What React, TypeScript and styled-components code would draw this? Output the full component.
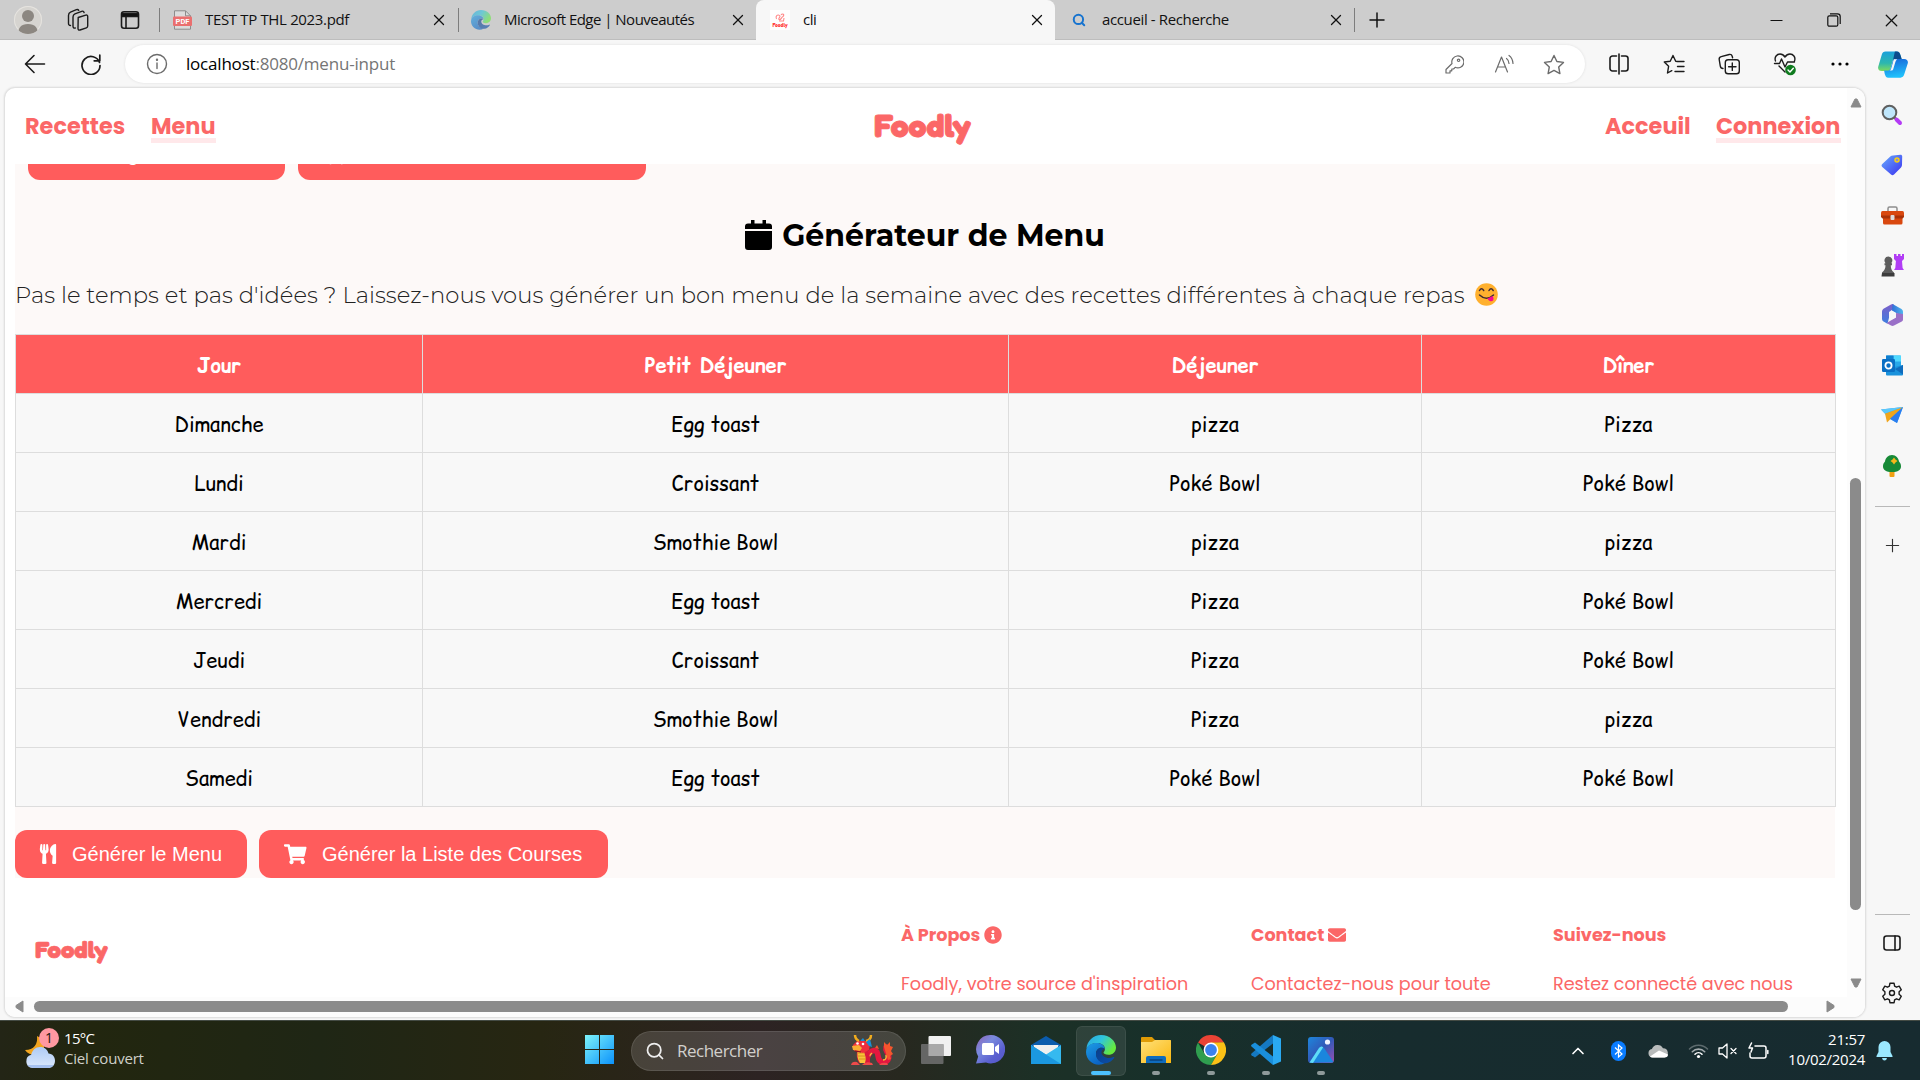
import React from 'react';
import styled, { createGlobalStyle, css } from 'styled-components';
import { FaUtensils, FaShoppingCart, FaInfoCircle, FaEnvelope, FaSave } from 'react-icons/fa';
import { Search, X, Plus, Minus, ChevronUp } from 'lucide-react';

const CORAL = '#ff5c5c';
const PINK_TEXT = '#fb6767';
const UI = `'Segoe UI', 'Open Sans', 'Noto Sans', sans-serif`;
const SITE = `Poppins, Inter, sans-serif`;
const TITLE = `Montserrat, Inter, 'Open Sans', sans-serif`;
const HAND = `'Comic Relief', 'Comic Neue', 'Open Sans', sans-serif`;

const Global = createGlobalStyle`
  * { box-sizing: border-box; }
  html, body { margin: 0; padding: 0; overflow: hidden; background: #f7f7f7; }
  svg { display: block; flex: none; }
`;

/* ---------- shell ---------- */
const Screen = styled.div`
  width: 1920px;
  height: 1080px;
  display: flex;
  flex-direction: column;
  background: #f7f7f7;
  font-family: ${UI};
  color: #111;
  overflow: hidden;
`;

const TabStrip = styled.div`
  height: 40px;
  flex: none;
  display: flex;
  align-items: stretch;
  background: #cdcdcd;
  box-shadow: inset 0 -1px 0 #bdbdbd;
`;

const StripIcons = styled.div`
  width: 158px;
  padding-left: 14px;
  display: flex;
  align-items: center;
`;

const StripIcon = styled.div<{ $w: number }>`
  width: ${(p) => p.$w}px;
  display: flex;
  justify-content: center;
`;

const Avatar = styled.div`
  width: 28px;
  height: 28px;
  border-radius: 50%;
  overflow: hidden;
  background: #d6d4d0;
  box-shadow: inset 0 0 0 1px #e6e4e0;
`;

const Tab = styled.div<{ $active?: boolean; $bar?: boolean }>`
  width: 299px;
  display: flex;
  align-items: center;
  padding: 0 9px 0 13px;
  border-left: 1px solid transparent;
  ${(p) =>
    p.$bar &&
    css`
      background: linear-gradient(#7d7d7d, #7d7d7d) 0 8px / 1px 24px no-repeat;
    `}
  ${(p) =>
    p.$active &&
    css`
      background: #f7f7f7;
      border-radius: 8px 8px 0 0;
    `}
`;

const TabIcon = styled.div`
  width: 20px;
  height: 20px;
  margin-right: 13px;
  display: flex;
  align-items: center;
  justify-content: center;
`;

const TabTitle = styled.span<{ $track: number }>`
  flex: 1;
  font-size: 15px;
  line-height: 20px;
  padding-bottom: 2px;
  white-space: nowrap;
  letter-spacing: ${(p) => p.$track}px;
`;

const NewTab = styled.div`
  width: 46px;
  display: flex;
  align-items: center;
  justify-content: center;
  background: linear-gradient(#7d7d7d, #7d7d7d) 0 8px / 1px 24px no-repeat;
`;

const WindowControls = styled.div`
  margin-left: auto;
  display: flex;
`;

const WindowButton = styled.div`
  width: 57.5px;
  display: flex;
  align-items: center;
  justify-content: center;
`;

/* ---------- toolbar ---------- */
const Toolbar = styled.div`
  height: 48px;
  flex: none;
  display: flex;
  align-items: center;
  padding: 0 1px 0 6px;
`;

const ToolButton = styled.div<{ $w?: number }>`
  width: ${(p) => p.$w ?? 55.3}px;
  display: flex;
  align-items: center;
  justify-content: center;
`;

const AddressBar = styled.div`
  width: 1460px;
  height: 38px;
  margin: 0 6px 0 7px;
  padding: 0 6px 0 21px;
  display: flex;
  align-items: center;
  background: #fff;
  border-radius: 19px;
  box-shadow: 0 0 3px rgba(0, 0, 0, 0.1);
`;

const Url = styled.span`
  flex: 1;
  margin-left: 18px;
  font-size: 17px;
  line-height: 24px;
  letter-spacing: -0.2px;
  color: #757575;
  b { font-weight: 400; color: #000; }
`;

/* ---------- body ---------- */
const Body = styled.div`
  height: 932px;
  flex: none;
  display: flex;
`;

const PageFrame = styled.div`
  width: 1860px;
  height: 929px;
  margin-left: 5px;
  display: grid;
  grid-template-columns: 1842px 18px;
  grid-template-rows: 909px 20px;
  background: #fff;
  border-radius: 10px 12px 12px 10px;
  box-shadow: 0 0 2px 1px rgba(0, 0, 0, 0.12);
  overflow: hidden;
`;

const Site = styled.div`
  overflow: hidden;
  display: flex;
  flex-direction: column;
`;

const SiteHeader = styled.header`
  height: 76px;
  flex: none;
  padding: 0 6px 0 20px;
  display: flex;
  align-items: center;
  justify-content: space-between;
  font-family: ${SITE};
  color: ${PINK_TEXT};
`;

const Nav = styled.nav`
  display: flex;
  gap: 25px;
`;

const NavLink = styled.a<{ $w: number; $on?: boolean }>`
  width: ${(p) => p.$w}px;
  height: 34px;
  line-height: 34px;
  font-size: 22.4px;
  font-weight: 700;
  white-space: nowrap;
  border-bottom: 5px solid ${(p) => (p.$on ? '#ffe8ea' : 'transparent')};
`;

const Brand = styled.span<{ $size: number }>`
  font-family: Fredoka, Nunito, Lato, sans-serif;
  font-weight: 700;
  font-size: ${(p) => p.$size}px;
  line-height: 1.2;
  -webkit-text-stroke: ${(p) => p.$size / 36}px ${PINK_TEXT};
  color: ${PINK_TEXT};
`;

const HeaderBrand = styled.div`
  width: 97px;
  margin: 1px 0 0 24px;
`;

const Main = styled.main`
  width: 1820px;
  height: 714px;
  flex: none;
  margin-left: 10px;
  background: #fdf9f8;
  display: flex;
  flex-direction: column;
`;

const ClippedRow = styled.div`
  height: 16px;
  flex: none;
  padding-left: 13px;
  display: flex;
  align-items: flex-end;
  gap: 13px;
  overflow: hidden;
`;

const ActionRow = styled.div`
  display: flex;
  gap: 12px;
  margin-top: 23px;
`;

const ActionButton = styled.button<{ $w: number; $pad?: number; $gap?: number; $lift?: number }>`
  width: ${(p) => p.$w}px;
  height: 48px;
  flex: none;
  padding: 0 0 ${(p) => p.$lift ?? 0}px ${(p) => p.$pad ?? 25}px;
  border: 0;
  border-radius: 12px;
  background: ${CORAL};
  color: #fff;
  display: flex;
  align-items: center;
  gap: ${(p) => p.$gap ?? 15.5}px;
  font: 400 20px/24px 'Liberation Sans', Arial, sans-serif;
  white-space: nowrap;
`;

const Heading = styled.h2`
  height: 88px;
  margin: 0;
  padding-top: 32px;
  display: flex;
  justify-content: center;
  gap: 10px;
  font: 700 30px/48px ${TITLE};
  color: #000;
  svg { margin-top: 8px; }
`;

const Lead = styled.p`
  height: 66px;
  margin: 0;
  padding-top: 10px;
  display: flex;
  gap: 10px;
  font: 300 22.7px/34px ${TITLE};
  letter-spacing: 0.04px;
  color: #222;
  white-space: nowrap;
  svg { margin-top: 5px; }
`;

const MenuTable = styled.table`
  width: 1820px;
  table-layout: fixed;
  border-collapse: collapse;
  font-family: ${HAND};
  font-size: 20px;
  line-height: 28px;
  color: #000;
`;

const Row = styled.tr`
  height: 59px;
`;

const HeadCell = styled.th<{ $w: number }>`
  width: ${(p) => p.$w}px;
  padding: 4px 0 0;
  border: 1px solid #ddd;
  background: ${CORAL};
  color: #fff;
  font-weight: 700;
`;

const Cell = styled.td`
  padding: 4px 0 0;
  border: 1px solid #ddd;
  background: #f8f8f8;
  text-align: center;
`;

const SiteFooter = styled.footer`
  height: 119px;
  flex: none;
  padding: 42px 0 0 30px;
  display: grid;
  grid-template-columns: 866px 350px 302px 1fr;
  font-family: ${SITE};
  color: ${PINK_TEXT};
`;

const FooterBrand = styled.div`
  padding-top: 16px;
`;

const FooterTitle = styled.h4`
  height: 30px;
  margin: 0 0 20px;
  display: flex;
  align-items: center;
  gap: 4px;
  font-size: 17.6px;
  font-weight: 700;
`;

const FooterText = styled.p`
  margin: 0;
  font-size: 17.6px;
  line-height: 28px;
  font-weight: 400;
  white-space: nowrap;
`;

const ScrollV = styled.div`
  background: #fcfcfc;
  display: flex;
  flex-direction: column;
  padding: 10px 0 9px 3px;
`;

const ThumbV = styled.div`
  width: 11px;
  height: 434px;
  margin: 370px 0 68px;
  border-radius: 6px;
  background: #8b8b8b;
`;

const ScrollH = styled.div`
  grid-column: 1 / 3;
  background: #fcfcfc;
  display: flex;
  align-items: center;
  padding: 0 0 1px 10px;
`;

const ThumbH = styled.div`
  width: 1754px;
  height: 11px;
  margin: 0 38px 0 10px;
  border-radius: 6px;
  background: #8b8b8b;
`;

const Sidebar = styled.aside`
  flex: 1;
  padding: 2px 1px 0 0;
  display: flex;
  flex-direction: column;
  align-items: center;
`;

const SideSlot = styled.div<{ $h?: number }>`
  height: ${(p) => p.$h ?? 50.1}px;
  display: flex;
  align-items: center;
  justify-content: center;
`;

const SideRule = styled.div<{ $top: number }>`
  width: 35px;
  height: 1px;
  flex: none;
  margin-top: ${(p) => p.$top}px;
  background: #b9b9b9;
`;

/* ---------- taskbar ---------- */
const Taskbar = styled.div`
  height: 60px;
  flex: none;
  display: flex;
  align-items: center;
  color: #fff;
  border-top: 1px solid #444b44;
  background: linear-gradient(90deg, #232516 0, #22260f 90px, #1f2615 320px, #272612 540px, #2d2323 760px, #27281f 900px, #1c3026 1040px, #18302a 1150px, #172c2e 1400px, #172b30 1920px);
`;

const Weather = styled.div`
  width: 572px;
  padding-left: 24px;
  display: flex;
  gap: 5px;
`;

const WeatherText = styled.div`
  display: flex;
  flex-direction: column;
  font-size: 15px;
  line-height: 20px;
  letter-spacing: -0.2px;
  span:first-child { letter-spacing: -0.7px; }
  span:last-child { color: #cfd0c9; }
`;

const TaskButton = styled.div<{ $active?: boolean }>`
  width: 50px;
  height: 50px;
  margin: 0 2.5px;
  border-radius: 6px;
  display: grid;
  grid-template-rows: 42px 4px;
  padding-top: 3px;
  justify-items: center;
  align-items: center;
  ${(p) =>
    p.$active &&
    css`
      background: rgba(255, 255, 255, 0.09);
      box-shadow: inset 0 0 0 1px rgba(255, 255, 255, 0.07);
    `}
`;

const Running = styled.i<{ $active?: boolean }>`
  width: ${(p) => (p.$active ? 20 : 8)}px;
  height: 4px;
  border-radius: 2px;
  background: ${(p) => (p.$active ? '#4cc2ff' : '#8f9a9a')};
`;

const SearchBox = styled.div`
  width: 275px;
  height: 40px;
  margin: 0 2px 0 4px;
  padding: 0 12px 0 14px;
  border-radius: 20px;
  display: flex;
  align-items: center;
  gap: 12px;
  font-size: 17px;
  letter-spacing: -0.5px;
  color: #d2d0cc;
  background: rgba(255, 255, 255, 0.14);
  box-shadow: inset 0 0 0 1px rgba(255, 255, 255, 0.1);
  span { flex: 1; }
`;

const Tray = styled.div`
  margin-left: auto;
  display: flex;
  align-items: center;
`;

const TrayItem = styled.div<{ $w: number }>`
  width: ${(p) => p.$w}px;
  display: flex;
  justify-content: center;
`;

const Clock = styled.div`
  width: 86px;
  text-align: right;
  font-size: 15px;
  line-height: 20px;
  letter-spacing: -0.27px;
  padding-bottom: 4px;
`;

/* ---------- drawings ---------- */
const line = { fill: 'none', stroke: '#1b1b1b', strokeWidth: 1.4, strokeLinecap: 'round', strokeLinejoin: 'round' } as const;
const grey = { ...line, stroke: '#6b6b6b', strokeWidth: 1.2 };

const STAR = 'M11 1.5l2.9 6 6.6.9-4.8 4.6 1.2 6.6-5.9-3.2-5.9 3.2 1.2-6.6L1.5 8.4l6.6-.9z';

const Person = () => (
  <svg width="28" height="28" viewBox="0 0 28 28">
    <circle cx="14" cy="10" r="6" fill="#8c8781" />
    <path d="M4 28c0-6 3-10 10-10s10 4 10 10z" fill="#8c8781" />
  </svg>
);

const Workspaces = () => (
  <svg width="22" height="24" viewBox="0 0 22 24" {...line}>
    <path d="M11.200 9.500l7.600-2.400c1.200-.3 1.900.3 1.900 1.400v9.500c0 .9-.4 1.500-1.300 1.800L13 22c-1.200.4-2-.2-2-1.400z" />
    <path d="M8.300 20C7 20.400 6 19.700 6 18.300V9c0-1.700.6-2.700 1.900-3.200l6.800-2.500c1.200-.4 2.100 0 2.400 1.200" />
    <path d="M3.500 17.500c-1.400 0-2-.9-2-2.300V7.400c0-1.800.7-2.800 2-3.300L9.400 1.700c1-.4 1.800-.2 2.300.6" />
  </svg>
);

const TabActions = () => (
  <svg width="20" height="20" viewBox="0 0 20 20" {...line} strokeWidth={1.6}>
    <rect x="1.500" y="1.800" width="17" height="16.500" rx="2.500" />
    <path d="M2 3.500h16v3H2z" fill="#111" />
    <path d="M6 7v11" />
  </svg>
);

const PdfIcon = () => (
  <svg width="19" height="20" viewBox="0 0 19 20">
    <path d="M1.500.8h11l5 5v13.400h-16z" fill="#dcdcdc" stroke="#8c8c8c" />
    <path d="M12.500.8v5h5" fill="none" stroke="#8c8c8c" />
    <rect x="0" y="6.500" width="19" height="9.500" rx="1" fill="#ea6f6f" />
    <text x="9.500" y="14" textAnchor="middle" fontFamily="Roboto, sans-serif" fontWeight="700" fontSize="7.500" fill="#fff">PDF</text>
  </svg>
);

const EdgeLogo = ({ size, faded }: { size: number; faded?: boolean }) => (
  <svg width={size} height={size} viewBox="0 0 30 30" opacity={faded ? 0.6 : 1}>
    <defs>
      <linearGradient id="eA" x1="0" y1="0" x2="1" y2=".5"><stop offset="0" stopColor="#2aa5e0" /><stop offset=".5" stopColor="#2fc4dd" /><stop offset="1" stopColor="#66eb3e" /></linearGradient>
      <linearGradient id="eB" x1="0" y1="0" x2=".6" y2="1"><stop offset="0" stopColor="#1d9de6" /><stop offset="1" stopColor="#0b63c4" /></linearGradient>
      <linearGradient id="eC" x1="0" y1="0" x2="1" y2="1"><stop offset="0" stopColor="#0a3f8c" /><stop offset="1" stopColor="#0b4fa8" /></linearGradient>
    </defs>
    <path d="M.5 13.500C1 6 7.300 0 15 0c8.800 0 15 6.200 15 12.500 0 4.500-3.300 7.300-7.500 7.300-3.200 0-5-1.200-5-2.200 0-.7 1.400-1.500 1.400-3.700C18.900 10.500 15.500 8 11 8 6 8 2 10.500.5 13.500z" fill="url(#eA)" />
    <path d="M.3 14.500C1.200 10.500 5.500 8 10.500 8c4.800 0 8.300 2.700 8.300 6-2-2.500-8.800-1.800-8.800 4.800 0 5.500 4.500 9 9.500 9C10.500 33 0 26.500 0 17z" fill="url(#eB)" />
    <path d="M18.900 14c-4.300-3-8.900.2-8.900 5 0 5 4.200 9.700 10.200 9.200 3.500-.5 6.500-3 8-5.500.3-.6-.2-1-.8-.7-5.500 2.600-12-.4-12-4.800 0-1.500 1.500-3 3.500-3.200z" fill="url(#eC)" />
  </svg>
);

const FoodlyFavicon = () => (
  <svg width="20" height="20" viewBox="0 0 20 20">
    <rect width="20" height="20" fill="#fff" />
    <path d="M6.500 9C5 6 8 3.500 10 6c0 2-2 2-1 3.500 2 1 2-2 4-3 2-2-.5-3.500-2-1.500M9 11h4.500L14 8" fill="none" stroke="#f88" strokeWidth="1.100" />
    <text x="10" y="16.500" textAnchor="middle" fontFamily="Fredoka, sans-serif" fontWeight="700" fontSize="5" fill="#f44">Foodly</text>
  </svg>
);

const Reload = () => (
  <svg width="22" height="22" viewBox="0 0 22 22" {...line} strokeWidth={1.7}>
    <path d="M19.500 9.500a9 9 0 1 0 .5 3M19.800 2.200v5.600h-5.600" />
  </svg>
);

const BackArrow = () => (
  <svg width="22" height="20" viewBox="0 0 22 20" {...line} strokeWidth={1.600}>
    <path d="M20.500 10H1.500M10 1.500L1.500 10l8.500 8.500" />
  </svg>
);

const InfoOutline = () => (
  <svg width="22" height="22" viewBox="0 0 22 22" {...grey} strokeWidth={1.400}>
    <circle cx="11" cy="11" r="9.500" /><path d="M11 10v5.500" /><circle cx="11" cy="6.800" r=".5" />
  </svg>
);

const KeyIcon = () => (
  <svg width="19" height="19" viewBox="0 0 19 19" {...grey}>
    <path d="M12 1a6 6 0 1 1-1.800 11.300L8.500 14H6.800v1.800H5V18H1v-3.500l6-6A6 6 0 0 1 12 1z" /><circle cx="13.600" cy="5.300" r="1.200" />
  </svg>
);

const ReadAloud = () => (
  <svg width="21" height="20" viewBox="0 0 21 20" {...grey}>
    <path d="M1.500 18L7.500 3l6 15M3.600 13h7.800M12.500 4.500q2.200 1.500 2.500 5M15 1.500q3.600 2.500 4 8" />
  </svg>
);

const StarIcon = () => <svg width="22" height="21" viewBox="0 0 22 21" {...grey} strokeWidth={1.4}><path d={STAR} /></svg>;

const SplitIcon = () => (
  <svg width="20" height="22" viewBox="0 0 20 22" {...line} strokeWidth={1.6}>
    <path d="M7.500 3H3.500a2.500 2.500 0 0 0-2.500 2.500v10A2.500 2.500 0 0 0 3.500 18h4M12.500 3h4A2.500 2.500 0 0 1 19 5.500v10a2.500 2.500 0 0 1-2.500 2.500h-4M10 1v20" />
  </svg>
);

const FavoritesIcon = () => (
  <svg width="22" height="21" viewBox="0 0 22 21" {...line}>
    <path d="M14.500 7.500L12.700 7.200 10 1.500 7.200 7.200 1.300 8l4.300 4.300L4.500 19l4.300-2.300M14.500 7.500h6.500M14.500 12.500H21M12 17.500h9" />
  </svg>
);

const CollectionsIcon = () => (
  <svg width="22" height="22" viewBox="0 0 22 22" {...line}>
    <path d="M5 15.500c-1.500 0-2.500-1-2.700-2.300L1.200 6.500C1 5 1.800 4 3.200 3.600l8-2.100c1.500-.3 2.600.3 3 1.700l.4 1.500" />
    <rect x="7.300" y="6.700" width="14" height="14" rx="2.800" /><path d="M14.300 10v7.400M10.600 13.700H18" />
  </svg>
);

const HealthIcon = () => (
  <svg width="24" height="24" viewBox="0 0 24 24" {...line}>
    <path d="M2.500 9C1 5 4 2 7 2c2.500 0 4 1.500 5 3 1-1.500 2.500-3 5-3 3 0 6 3 4.500 7M12 20l-6-6M1.500 11.500h5l2-4.500 3.500 8 2.500-5h7" />
    <circle cx="17.500" cy="18" r="5.300" fill="#0f7b1f" stroke="none" /><path d="M15 18l2 2 3.300-3.800" stroke="#fff" />
  </svg>
);

const Dots = () => <svg width="18" height="4" viewBox="0 0 18 4"><circle cx="2" cy="2" r="1.600" /><circle cx="9" cy="2" r="1.600" /><circle cx="16" cy="2" r="1.600" /></svg>;

const Copilot = () => (
  <svg width="30" height="27" viewBox="0 0 32 28">
    <defs>
      <linearGradient id="cA" x1="0" y1="0" x2="0" y2="1"><stop offset="0" stopColor="#1aa0dc" /><stop offset=".6" stopColor="#2db7ae" /><stop offset="1" stopColor="#7edb5c" /></linearGradient>
      <linearGradient id="cB" x1="0" y1="0" x2=".2" y2="1"><stop offset="0" stopColor="#1662d8" /><stop offset="1" stopColor="#20c0fb" /></linearGradient>
    </defs>
    <path d="M8 0h12c2.500 0 3.200 1.800 4 4l1.200 4H19c-2 0-3 1-3.600 3l-2 7c-.5 2-1.400 3-3.400 3H4c-3 0-4.500-2-3.700-5L4 3.500C4.700 1 6 0 8 0z" fill="url(#cA)" />
    <path d="M18 0h2c2.500 0 3.200 1.800 4 4l1.200 4H19c-1.600 0-2.500.6-3 1.500z" fill="#0b4a8d" />
    <path d="M24 28H11c-2.300 0-3-1.800-3.800-4L6.500 20.500H10c2 0 3-1 3.500-3l2-6.500c.5-2 1.500-3 3.500-3h9c3 0 4.500 2 3.700 5L28 24.500c-.7 2.500-2 3.500-4 3.500z" fill="url(#cB)" />
    <path d="M17 8.500h3.500c-1.200 1-1.700 2.200-2.300 4l-2 6.500q-.5 1.500-1.500 1.500h-2.500q1.300-.5 1.800-2l2-7c.3-1.500.8-2.300 1-3z" fill="#f7f7f7" />
  </svg>
);

const Magnifier = () => (
  <svg width="22" height="22" viewBox="0 0 22 22">
    <path d="M13 13l2.500 2.500" stroke="#777" strokeWidth="2.500" /><path d="M15.500 15.500l3.500 3.500" stroke="#b43bf5" strokeWidth="4" strokeLinecap="round" />
    <circle cx="8.500" cy="8.500" r="6.800" fill="#bfe6fb" stroke="#5f6060" strokeWidth="2" />
  </svg>
);

const TagIcon = () => (
  <svg width="22" height="22" viewBox="0 0 22 22">
    <defs><linearGradient id="tg" x1="0" y1="0" x2="1" y2="1"><stop offset="0" stopColor="#68aefc" /><stop offset="1" stopColor="#3a2ff0" /></linearGradient></defs>
    <path d="M12 1.500l7.500-.8c1 0 1.700.6 1.700 1.600L21 11c0 1-.4 1.700-1 2.400l-7 7c-1 1-2 1-3 0L1.300 13c-1-1-1-2 0-3l8-7.500c.7-.6 1.600-.9 2.700-1z" fill="url(#tg)" />
    <circle cx="16" cy="6" r="2" fill="#8b8ad9" stroke="#f7cf13" strokeWidth="1.500" />
  </svg>
);

const Toolbox = () => (
  <svg width="23" height="19" viewBox="0 0 23 19">
    <path d="M7 6V2.500Q7 1 8.500 1h6Q16 1 16 2.500V6" fill="none" stroke="#8d8d8d" strokeWidth="1.500" />
    <path d="M1.500 5h20q1.500 0 1.500 2v3.500L21.500 12v5q0 1.500-1.500 1.500H3.500Q2 18.500 2 17v-5L0 10.500V7q0-2 1.500-2z" fill="#d9480f" />
    <path d="M0 9.500h23V11l-1.500 1.500h-20L0 11z" fill="#a93208" /><rect x="9.500" y="9" width="4" height="5" rx="1" fill="#ddd" />
  </svg>
);

const Chess = () => (
  <svg width="23" height="24" viewBox="0 0 23 24">
    <path d="M13 1h2.500v2h1.500V1h2.500v2h1.500V1h2v5l-2 2 .6 7 1.400 2H13l1.300-2 .6-7L13 6z" fill="#b13df5" />
    <path d="M7.500 3.500a4 4 0 0 1 2.800 6.800h.7v2H9.800c0 3.500.7 5 3.200 7.200v3.500H1v-3.500c2.500-2.200 3.500-3.700 3.500-7.200H3.500v-2h1A4 4 0 0 1 7.500 3.500z" fill="#5d5d5d" /><path d="M1 20h12.500v3.500H.5z" fill="#3d3d3d" />
  </svg>
);

const M365 = () => (
  <svg width="21" height="22" viewBox="0 0 21 22">
    <defs>
      <linearGradient id="mA" x1="0" y1="0" x2="0" y2="1"><stop offset="0" stopColor="#7d5fc9" /><stop offset="1" stopColor="#3d7fe0" /></linearGradient>
      <linearGradient id="mB" x1="0" y1="0" x2="1" y2="0"><stop offset="0" stopColor="#2f6fd6" /><stop offset="1" stopColor="#50b6ee" /></linearGradient>
    </defs>
    <path d="M9 .5L1.500 4.800Q0 5.800 0 7.500v7.500q0 1.500 1.500 2.500l4 2.300 1.500-6V8l5-3.500V1Q11-.5 9 .5z" fill="url(#mA)" />
    <path d="M10.500 0L19.500 5Q21 6 21 7.500V13l-5.500-3.200L10 6.500z" fill="url(#mB)" />
    <path d="M21 10v5.500q0 1.300-1.200 2L12 21.600q-1.500.7-3 0L4.500 19 14 13.500V9z" fill="#9a70c8" />
    <path d="M10.500 7.200l3.500 2v4l-3.500 2-3.500-2v-4z" fill="#f7f7f7" />
  </svg>
);

const Outlook = () => (
  <svg width="21" height="21" viewBox="0 0 21 21">
    <rect x="4" y=".5" width="15" height="15" rx="1.200" fill="#28a8ea" /><rect x="11.500" y=".5" width="7.500" height="6" fill="#50d9ff" /><rect x="4" y=".5" width="7.500" height="5" fill="#0f7fd0" />
    <path d="M4 14l17-4v9.500q0 1-1 1H5q-1 0-1-1z" fill="#1a92dc" /><path d="M21 10v9.500L13 14z" fill="#0f6cbd" />
    <rect x="0" y="4" width="13" height="13" rx="1.200" fill="#0a6fc4" /><circle cx="6.500" cy="10.500" r="3.100" fill="none" stroke="#fff" strokeWidth="1.800" />
  </svg>
);

const Plane = () => (
  <svg width="22" height="17" viewBox="0 0 22 17">
    <path d="M0 2.500L22 0l-6 16-7-4z" fill="#35a6f4" /><path d="M22 0L6 15.500 4 6.500z" fill="#f0a51c" /><path d="M22 0L16 16l-7-4.200z" fill="#2b7df0" /><path d="M0 2.500L22 0 4 6.500z" fill="#5cc8fa" />
  </svg>
);

const Tree = () => (
  <svg width="18" height="22" viewBox="0 0 18 22">
    <rect x="6.500" y="15" width="5" height="7" rx="1" fill="#f0a013" /><path d="M9 0c4 0 6.500 3 7 6.500 1.500 1.500 2 3 2 5 0 3.500-3 5.500-9 5.500s-9-2-9-5.500c0-2 .5-3.500 2-5C2.500 3 5 0 9 0z" fill="#178a37" />
    <path d="M11 2.500l1.500 2 2 1.500-2 1.500-1.500 2-1.500-2-2-1.500 2-1.500z" fill="#f7b71b" />
  </svg>
);

const PanelIcon = () => <svg width="18" height="16" viewBox="0 0 18 16" {...line} strokeWidth={1.600}><rect x="1" y="1" width="16" height="14" rx="2.500" /><path d="M12 1v14" /></svg>;

const Gear = () => (
  <svg width="22" height="22" viewBox="0 0 22 22" {...line}>
    <path d="M8.900 1.300h4.200l.5 2.800 1.900 1.100 2.700-1 2.100 3.600-2.200 1.900v2.600l2.200 1.900-2.100 3.600-2.700-1-1.900 1.100-.5 2.800H8.900l-.5-2.800-1.900-1.100-2.700 1-2.100-3.600 2.200-1.900V9.700L1.700 7.800l2.100-3.600 2.700 1 1.900-1.100z" /><circle cx="11" cy="11" r="2.500" />
  </svg>
);

const Calendar = () => (
  <svg width="27" height="30" viewBox="0 0 27 30">
    <path d="M6 0h3.500v3.500h8V0H21v3.500h3Q27 3.500 27 6.500V9H0V6.500Q0 3.500 3 3.500h3zM0 11h27v16q0 3-3 3H3q-3 0-3-3z" />
  </svg>
);

const Yum = () => (
  <svg width="23" height="23" viewBox="0 0 23 23">
    <circle cx="11.500" cy="11.500" r="11.300" fill="#ffb02e" />
    <path d="M4.500 7.500q2-3.500 4.200 0M14 7.500q2-3.500 4.200 0M4.500 12q7 6.500 14 0" fill="none" stroke="#402a32" strokeWidth="1.500" strokeLinecap="round" />
    <path d="M12.500 15.500l5-2.600q2 2.500.8 4.300-1.500 1.600-3.500.8-1.700-.8-2.300-2.500z" fill="#f70a8d" />
  </svg>
);

const WeatherIcon = () => (
  <svg width="35" height="46" viewBox="0 0 35 46">
    <defs><linearGradient id="wc" x1="0" y1="0" x2="0" y2="1"><stop offset="0" stopColor="#aecbf5" /><stop offset="1" stopColor="#dbe8fc" /></linearGradient></defs>
    <path d="M13 8c1 8-3 14-12 14 4 6 14 7 19 1V12z" fill="#f2a51f" />
    <path d="M8.500 40a6.800 6.800 0 0 1-1.300-13.300C8.500 22 11.500 19 16 19s7.500 2.500 8.500 6.500c4 .2 6.500 3.200 6.500 7.200 0 4.500-3 7.300-7 7.300z" fill="url(#wc)" /><path d="M9 40q-4-.3-6-3h27q-2 3-6 3z" fill="#86a9e8" opacity=".6" />
    <circle cx="25" cy="10" r="10" fill="#ff98a1" />
    <text x="25" y="15" textAnchor="middle" fontFamily="Open Sans, sans-serif" fontSize="14" fill="#22160f">1</text>
  </svg>
);

const WindowsLogo = () => (
  <svg width="29" height="29" viewBox="0 0 29 29">
    <defs><linearGradient id="win" gradientUnits="userSpaceOnUse" x1="0" y1="0" x2="29" y2="29"><stop offset="0" stopColor="#7df4fb" /><stop offset="1" stopColor="#0c92fb" /></linearGradient></defs>
    <path d="M0 0h14v14H0zM15 0h14v14H15zM0 15h14v14H0zM15 15h14v14H15z" fill="url(#win)" />
  </svg>
);

const Dragon = () => (
  <svg width="43" height="31" viewBox="0 0 43 31">
    <path d="M16 25c1-8 7-12 10-8 2 4 0 9 5 10 6 1 8-4 6-8-1-3-3-3-2-7" fill="none" stroke="#e5173f" strokeWidth="5.500" strokeLinecap="round" />
    <path d="M17 27q1-7 4-9M32 25q4 0 3-5" fill="none" stroke="#f7c33a" strokeWidth="1.400" />
    <path d="M33 12l0-5 3 3 3-3 0 4 3 1-2 4 2 3-3 2 1 3-3 1zM24 13l2-3 2 4z" fill="#f4562d" />
    <path d="M7 14h9l3 8v6H8q-4-7-1-14z" fill="#d9183c" /><path d="M7 15h5q4 7 2 13H9q-4-6-2-13z" fill="#f7c33a" /><path d="M7 18h6M7 21h7M8 24h7" stroke="#d68a1d" strokeWidth=".9" />
    <path d="M2 10l4-4h9l4 4-1 5-6 3-8-2q-3-2-2-6z" fill="#ee2f3c" /><path d="M1 11l7-1 3 3-2 3-7-1z" fill="#f9ae32" /><path d="M4 16l6 1" stroke="#8a0f24" strokeWidth="1.200" />
    <path d="M4 0q0 4 4 6M20 0q0 5-5 6" fill="none" stroke="#f2ac1d" strokeWidth="2.500" /><path d="M9 6l3-3 2 3zM15 7l4-3 2 8-3-1z" fill="#168fd6" />
    <circle cx="6.500" cy="8.500" r="1.300" fill="#fff" /><circle cx="12" cy="9" r="1.300" fill="#fff" />
    <path d="M0 30q1-4 6-3l3 3zM11 30q3-4 10-2l1 2zM28 30q2-3 8-2l1 2z" fill="#ee4a4a" />
  </svg>
);

const TaskView = () => (
  <svg width="30" height="28" viewBox="0 0 30 28">
    <rect x="7.500" y="0" width="22.500" height="20" rx="1" fill="#f1f1f1" /><rect x="0" y="8" width="22.500" height="20" rx="1" fill="#6d6d6d" opacity=".9" /><rect x="7.500" y="8" width="15" height="12" fill="#a9a9a9" />
  </svg>
);

const Chat = () => (
  <svg width="29" height="29" viewBox="0 0 29 29">
    <defs><linearGradient id="ch" x1="0" y1="0" x2="1" y2="1"><stop offset="0" stopColor="#8f62b5" /><stop offset=".35" stopColor="#7a8ade" /><stop offset=".7" stopColor="#5a5fd0" /><stop offset="1" stopColor="#5557c8" /></linearGradient></defs>
    <path d="M14.500 0A14.200 14.200 0 1 1 10 27.500L0 28.500l2.200-7A14.200 14.200 0 0 1 14.500 0z" fill="url(#ch)" />
    <rect x="6" y="8" width="12" height="12" rx="1.500" fill="#fff" /><path d="M19 12l4-3v10l-4-3z" fill="#fff" />
  </svg>
);

const Mail = () => (
  <svg width="30" height="28" viewBox="0 0 30 28">
    <path d="M0 9L15 0l15 9v3H0z" fill="#0b5cad" /><path d="M3 9h24v11H3z" fill="#f2f2f2" /><path d="M0 9l15 9.500L30 9v19H0z" fill="#35b9ef" /><path d="M0 28V9l30 19z" fill="#1b98e0" /><path d="M2 9h26l-13 9z" fill="#efefef" />
  </svg>
);

const Folder = () => (
  <svg width="30" height="26" viewBox="0 0 30 26">
    <defs><linearGradient id="fo" x1="0" y1="0" x2="1" y2="1"><stop offset="0" stopColor="#ffe07a" /><stop offset="1" stopColor="#fbb80f" /></linearGradient></defs>
    <path d="M0 1q0-1 1-1h10l3 3h15q1 0 1 1v4H0z" fill="#df9b06" /><path d="M0 5h11l3-2h15q1 0 1 1v22H0z" fill="url(#fo)" />
    <path d="M5 26v-5q0-2 2-2h16q2 0 2 2v5z" fill="#0f6cbd" /><path d="M8.500 23h13" stroke="#0a3f78" strokeWidth="1.400" />
  </svg>
);

const Chrome = () => (
  <svg width="30" height="30" viewBox="0 0 30 30">
    <path d="M15 15L2 7.500A15 15 0 0 1 28 7.500L15 8z" fill="#ea4335" /><path d="M2 7.500A15 15 0 0 0 15 30l6.500-11.300L15 15 8.500 18.700z" fill="#2f9e4f" /><path d="M28 7.500A15 15 0 0 1 15 30l6.500-11.300L21.500 8z" fill="#fbc116" /><path d="M15 7.500h13l-6.500 11z" fill="#fbc116" />
    <circle cx="15" cy="15" r="7.400" fill="#fff" /><circle cx="15" cy="15" r="5.900" fill="#3b82ee" />
  </svg>
);

const VSCode = () => (
  <svg width="30" height="30" viewBox="0 0 30 30">
    <path d="M22 0l8 3.500v23L22 30z" fill="#2aa9f2" /><path d="M22 0v8.500L4 22.500l-3.500-2.200q-.8-1 0-1.800z" fill="#1579c2" /><path d="M22 30v-8.500L4 7.500.5 9.700q-.8 1 0 1.800z" fill="#1a8fdc" />
  </svg>
);

const Photos = () => (
  <svg width="26" height="26" viewBox="0 0 26 26">
    <defs><linearGradient id="ph" x1="0" y1="0" x2="1" y2="1"><stop offset="0" stopColor="#1e86dc" /><stop offset=".5" stopColor="#3159b8" /><stop offset="1" stopColor="#9a4fb0" /></linearGradient></defs>
    <rect width="26" height="26" rx="3" fill="url(#ph)" /><path d="M1.500 25.500L11 11q2.500-3 5 0l9.500 14q-1 .5-2.500.5H3q-1 0-1.500 0z" fill="#1b86dd" /><path d="M1.500 25.500L11 11q2-2.600 4.200-.8L5 26z" fill="#5fdcf7" /><circle cx="19.500" cy="5" r="2.600" fill="#eef3ff" />
  </svg>
);

const BluetoothIcon = () => (
  <svg width="15" height="20" viewBox="0 0 15 20">
    <rect width="15" height="20" rx="7.500" fill="#0a7cff" />
    <path d="M4 6.500l7 6.500-3.500 3V4L11 7l-7 6.500" fill="none" stroke="#fff" strokeWidth="1.200" />
  </svg>
);

const RestoreIcon = () => (
  <svg width="14" height="14" viewBox="0 0 14 14" fill="none" stroke="#111" strokeWidth="1.200">
    <rect x=".8" y="2.800" width="10" height="10.400" rx="1.500" />
    <path d="M3 .8h7.500q2.700 0 2.700 2.700V11" />
  </svg>
);

const CloudIcon = () => <svg width="21" height="14" viewBox="0 0 21 14"><path d="M4.500 13.500a4.300 4.300 0 0 1-.6-8.500A6 6 0 0 1 15 4.300a4.700 4.700 0 0 1 1.500 9.200z" fill="#b9bcbc" /><path d="M2 12.500l9-6 9 4q0 3-3.500 3h-12q-1.500 0-2.500-1z" fill="#fff" /></svg>;

const Wifi = () => (
  <svg width="21" height="16" viewBox="0 0 21 16" fill="none" strokeLinecap="round" strokeWidth="1.600">
    <path d="M1.500 6a12.700 12.700 0 0 1 18 0" stroke="#5c6a6d" /><path d="M4.300 8.700a8.800 8.800 0 0 1 12.400 0" stroke="#a3abad" /><path d="M7 11.200a5 5 0 0 1 7 0" stroke="#fff" /><circle cx="10.500" cy="13.500" r="1.600" fill="#fff" />
  </svg>
);

const Muted = () => <svg width="20" height="16" viewBox="0 0 20 16" fill="none" stroke="#fff" strokeWidth="1.300" strokeLinejoin="round" strokeLinecap="round"><path d="M1 5h3.500L9 1v14l-4.500-4H1zM13 5.500l5 5M18 5.500l-5 5" /></svg>;

const Battery = () => <svg width="21" height="18" viewBox="0 0 21 18" fill="none" stroke="#fff" strokeWidth="1.500" strokeLinejoin="round" strokeLinecap="round"><path d="M7 4h9q2 0 2 2v8q0 2-2 2H4q-2 0-2-2v-3M19.800 8.500v3" /><path d="M3.500 1L1 6h3.500L3 10" /></svg>;

const Bell = () => <svg width="17" height="20" viewBox="0 0 17 20"><path d="M8.500 0a6 6 0 0 1 6 6v5l2 4v1H.5v-1l2-4V6a6 6 0 0 1 6-6zM6 17h5q-.5 2.500-2.500 2.500T6 17z" fill="#9be9ff" /></svg>;

const Arrow = ({ d, w, h }: { d: string; w: number; h: number }) => <svg width={w} height={h} viewBox={`0 0 ${w} ${h}`}><path d={d} fill="#8b8b8b" stroke="#8b8b8b" strokeWidth="1" strokeLinejoin="round" /></svg>;

/* ---------- data ---------- */
const COLUMNS: [string, number][] = [['Jour', 407], ['Petit Déjeuner', 586], ['Déjeuner', 413], ['Dîner', 414]];
const WEEK = [
  ['Dimanche', 'Egg toast', 'pizza', 'Pizza'],
  ['Lundi', 'Croissant', 'Poké Bowl', 'Poké Bowl'],
  ['Mardi', 'Smothie Bowl', 'pizza', 'pizza'],
  ['Mercredi', 'Egg toast', 'Pizza', 'Poké Bowl'],
  ['Jeudi', 'Croissant', 'Pizza', 'Poké Bowl'],
  ['Vendredi', 'Smothie Bowl', 'Pizza', 'pizza'],
  ['Samedi', 'Egg toast', 'Poké Bowl', 'Poké Bowl'],
];
const SIDE = [Magnifier, TagIcon, Toolbox, Chess, M365, Outlook, Plane, Tree];

const TabClose = () => <X size={18} strokeWidth={1.7} color="#111" />;

export default function App() {
  return (
    <Screen>
      <Global />
      <TabStrip>
        <StripIcons>
          <StripIcon $w={28}><Avatar><Person /></Avatar></StripIcon>
          <StripIcon $w={71}><Workspaces /></StripIcon>
          <StripIcon $w={34}><TabActions /></StripIcon>
        </StripIcons>
        <Tab $bar><TabIcon><PdfIcon /></TabIcon><TabTitle $track={-0.34}>TEST TP THL 2023.pdf</TabTitle><TabClose /></Tab>
        <Tab $bar><TabIcon><EdgeLogo size={20} faded /></TabIcon><TabTitle $track={-0.52}>Microsoft Edge | Nouveautés</TabTitle><TabClose /></Tab>
        <Tab $active><TabIcon><FoodlyFavicon /></TabIcon><TabTitle $track={-0.5}>cli</TabTitle><TabClose /></Tab>
        <Tab><TabIcon><Search size={14} strokeWidth={3.4} color="#1673cf" /></TabIcon><TabTitle $track={-0.37}>accueil - Recherche</TabTitle><TabClose /></Tab>
        <NewTab><Plus size={24} strokeWidth={1.5} color="#111" /></NewTab>
        <WindowControls>
          <WindowButton><Minus size={19} strokeWidth={1.5} color="#111" /></WindowButton>
          <WindowButton><RestoreIcon /></WindowButton>
          <WindowButton><X size={21} strokeWidth={1.4} color="#111" /></WindowButton>
        </WindowControls>
      </TabStrip>

      <Toolbar>
        <ToolButton $w={57}><BackArrow /></ToolButton>
        <ToolButton $w={55}><Reload /></ToolButton>
        <AddressBar>
          <InfoOutline />
          <Url><b>localhost</b>:8080/menu-input</Url>
          <ToolButton $w={50}><KeyIcon /></ToolButton>
          <ToolButton $w={50}><ReadAloud /></ToolButton>
          <ToolButton $w={50}><StarIcon /></ToolButton>
        </AddressBar>
        <ToolButton><SplitIcon /></ToolButton>
        <ToolButton><FavoritesIcon /></ToolButton>
        <ToolButton><CollectionsIcon /></ToolButton>
        <ToolButton><HealthIcon /></ToolButton>
        <ToolButton><Dots /></ToolButton>
        <ToolButton $w={51}><Copilot /></ToolButton>
      </Toolbar>

      <Body>
        <PageFrame>
          <Site>
            <SiteHeader>
              <Nav>
                <NavLink $w={101}>Recettes</NavLink>
                <NavLink $w={65} $on>Menu</NavLink>
              </Nav>
              <HeaderBrand><Brand $size={32}>Foodly</Brand></HeaderBrand>
              <Nav>
                <NavLink $w={86}>Acceuil</NavLink>
                <NavLink $w={125} $on>Connexion</NavLink>
              </Nav>
            </SiteHeader>
            <Main>
              <ClippedRow>
                <ActionButton $w={257} $gap={14} $lift={4}><FaSave size={18} />Enregistrer le Menu</ActionButton>
                <ActionButton $w={348} $lift={4}><FaShoppingCart size={22.5} />Générer la Liste des Courses</ActionButton>
              </ClippedRow>
              <Heading><Calendar />Générateur de Menu</Heading>
              <Lead>
                Pas le temps et pas d'idées ? Laissez-nous vous générer un bon menu de la semaine avec des recettes différentes à chaque repas
                <Yum />
              </Lead>
              <MenuTable>
                <thead>
                  <Row>{COLUMNS.map(([name, w]) => <HeadCell key={name} $w={w}>{name}</HeadCell>)}</Row>
                </thead>
                <tbody>
                  {WEEK.map((day) => (
                    <Row key={day[0]}>{day.map((meal, i) => <Cell key={i}>{meal}</Cell>)}</Row>
                  ))}
                </tbody>
              </MenuTable>
              <ActionRow>
                <ActionButton $w={232} $pad={23} $gap={14}><FaUtensils size={20} />Générer le Menu</ActionButton>
                <ActionButton $w={349}><FaShoppingCart size={22.5} />Générer la Liste des Courses</ActionButton>
              </ActionRow>
            </Main>
            <SiteFooter>
              <FooterBrand><Brand $size={24}>Foodly</Brand></FooterBrand>
              <div>
                <FooterTitle>À Propos <FaInfoCircle size={18} /></FooterTitle>
                <FooterText>Foodly, votre source d'inspiration</FooterText>
              </div>
              <div>
                <FooterTitle>Contact <FaEnvelope size={18} /></FooterTitle>
                <FooterText>Contactez-nous pour toute</FooterText>
              </div>
              <div>
                <FooterTitle>Suivez-nous</FooterTitle>
                <FooterText>Restez connecté avec nous</FooterText>
              </div>
            </SiteFooter>
          </Site>
          <ScrollV>
            <Arrow w={12} h={10} d="M1 9h10L7 1H5z" />
            <ThumbV />
            <Arrow w={12} h={10} d="M1 1h10L7 9H5z" />
          </ScrollV>
          <ScrollH>
            <Arrow w={9} h={13} d="M8 1v11L1 7.500v-2z" />
            <ThumbH />
            <Arrow w={9} h={13} d="M1 1v11l7-4.500v-2z" />
          </ScrollH>
        </PageFrame>
        <Sidebar>
          {SIDE.map((Icon, i) => <SideSlot key={i}><Icon /></SideSlot>)}
          <SideRule $top={15} />
          <SideSlot $h={78}><Plus size={21} strokeWidth={1.3} color="#333" /></SideSlot>
          <SideRule $top={329} />
          <SideSlot $h={57}><PanelIcon /></SideSlot>
          <SideSlot $h={42}><Gear /></SideSlot>
        </Sidebar>
      </Body>

      <Taskbar>
        <Weather>
          <WeatherIcon />
          <WeatherText><span>15°C</span><span>Ciel couvert</span></WeatherText>
        </Weather>
        <TaskButton><WindowsLogo /></TaskButton>
        <SearchBox><Search size={20} strokeWidth={2.1} color="#eee" /><span>Rechercher</span><Dragon /></SearchBox>
        <TaskButton><TaskView /></TaskButton>
        <TaskButton><Chat /></TaskButton>
        <TaskButton><Mail /></TaskButton>
        <TaskButton $active><EdgeLogo size={30} /><Running $active /></TaskButton>
        <TaskButton><Folder /><Running /></TaskButton>
        <TaskButton><Chrome /><Running /></TaskButton>
        <TaskButton><VSCode /><Running /></TaskButton>
        <TaskButton><Photos /><Running /></TaskButton>
        <Tray>
          <TrayItem $w={40}><ChevronUp size={20} strokeWidth={2} /></TrayItem>
          <TrayItem $w={40}><BluetoothIcon /></TrayItem>
          <TrayItem $w={40}><CloudIcon /></TrayItem>
          <TrayItem $w={40}><Wifi /></TrayItem>
          <TrayItem $w={20}><Muted /></TrayItem>
          <TrayItem $w={41}><Battery /></TrayItem>
          <Clock>21:57<br />10/02/2024</Clock>
          <TrayItem $w={39}><Bell /></TrayItem>
          <TrayItem $w={16} />
        </Tray>
      </Taskbar>
    </Screen>
  );
}
